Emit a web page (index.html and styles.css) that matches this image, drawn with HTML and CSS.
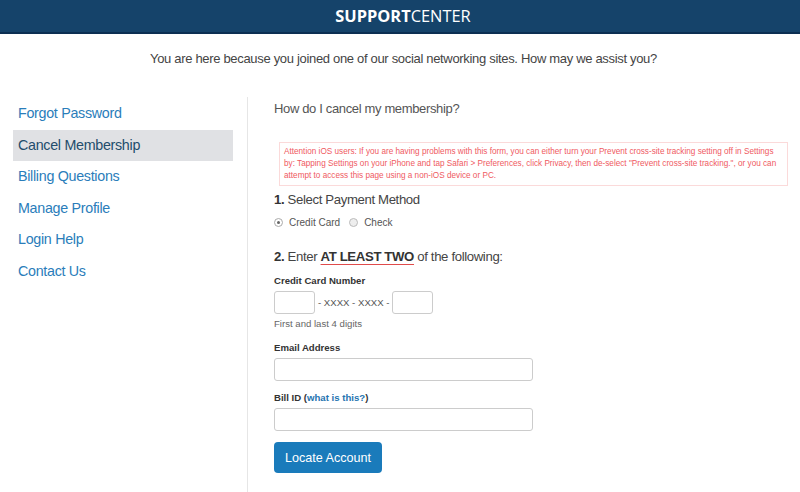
FILE: index.html
```html
<!DOCTYPE html>
<html>
<head>
<meta charset="utf-8">
<link rel="stylesheet" href="styles.css">
</head>
<body>
<header class="topbar">
  <div class="brand"><span class="brand-bold">SUPPORT</span><span class="brand-light">CENTER</span></div>
</header>
<p class="intro">You are here because you joined one of our social networking sites. How may we assist you?</p>
<div class="layout">
  <nav class="sidebar">
    <a class="nav-item" href="#">Forgot Password</a>
    <a class="nav-item active" href="#">Cancel Membership</a>
    <a class="nav-item" href="#">Billing Questions</a>
    <a class="nav-item" href="#">Manage Profile</a>
    <a class="nav-item" href="#">Login Help</a>
    <a class="nav-item" href="#">Contact Us</a>
  </nav>
  <main class="content">
    <h1 class="question">How do I cancel my membership?</h1>
    <div class="alert">Attention iOS users: If you are having problems with this form, you can either turn your Prevent cross-site tracking setting off in Settings by: Tapping Settings on your iPhone and tap Safari &gt; Preferences, click Privacy, then de-select "Prevent cross-site tracking.", or you can attempt to access this page using a non-iOS device or PC.</div>
    <h2 class="step"><b>1.</b> Select Payment Method</h2>
    <div class="radios">
      <label class="radio"><span class="dot checked"></span>Credit Card</label>
      <label class="radio"><span class="dot"></span>Check</label>
    </div>
    <h2 class="step step2"><b>2.</b> Enter <b class="emph">AT LEAST TWO</b> of the following:</h2>
    <div class="field cc-field">
      <div class="label">Credit Card Number</div>
      <div class="cc-row">
        <span class="input small"></span>
        <span class="mask">- XXXX - XXXX -</span>
        <span class="input small"></span>
      </div>
      <div class="hint">First and last 4 digits</div>
    </div>
    <div class="field">
      <div class="label">Email Address</div>
      <span class="input wide"></span>
    </div>
    <div class="field bill-field">
      <div class="label">Bill ID (<a class="what" href="#">what is this?</a>)</div>
      <span class="input wide"></span>
    </div>
    <button class="btn">Locate Account</button>
  </main>
</div>
</body>
</html>
```
FILE: styles.css
```css
html, body { margin: 0; padding: 0; background: #fff; }
body { font-family: "Liberation Sans", Arial, sans-serif; color: #444; width: 800px; height: 492px; overflow: hidden; }
.topbar { height: 32px; background: #15436a; border-bottom: 2px solid #0c2f52; display: flex; align-items: center; justify-content: center; }
.brand { font-family: "Open Sans", sans-serif; font-size: 16.4px; color: #fff; padding-left: 6px; line-height: 32px; }
.brand-bold { font-weight: 700; }
.brand-light { font-weight: 400; }
.intro { margin: 0; text-align: center; font-size: 13px; letter-spacing: -0.32px; color: #444; padding-top: 16px; height: 47px; line-height: 17px; padding-left: 7px; }
.layout { display: flex; }
.sidebar { width: 234px; padding: 1px 0 0 13px; border-right: 1px solid #e6e6e6; display: flex; flex-direction: column; height: 400px; }
.nav-item { display: block; height: 31.5px; line-height: 31.5px; padding-left: 5px; width: 215px; font-size: 14.3px; letter-spacing: -0.3px; color: #2a7dba; text-decoration: none; }
.nav-item.active { background: #e0e1e4; color: #234d6c; }
.content { padding: 0 0 0 26px; flex: 1; }
.question { margin: 4px 0 0 0; font-size: 13px; letter-spacing: -0.35px; font-weight: normal; color: #555; line-height: 16px; }
.alert { margin: 25px 12px 0 5px; border: 1px solid #fbdada; padding: 3px 4px; font-size: 8.2px; line-height: 12px; color: #ef5a5f; height: 36px; }
.step { margin: 5px 0 0 0; font-size: 13.2px; letter-spacing: -0.37px; font-weight: normal; color: #444; line-height: 17px; }
.step b { color: #333; }
.step2 { margin-top: 20px; }
.emph { text-decoration: underline; text-decoration-color: #e04b4b; text-underline-offset: 3px; text-decoration-thickness: 1px; }
.radios { display: flex; gap: 9px; margin-top: 9px; font-size: 10px; color: #555; }
.radio { display: flex; align-items: center; gap: 6px; }
.dot { width: 9px; height: 9px; border: 1px solid #bbb; border-radius: 50%; background: #eee; box-sizing: border-box; position: relative; }
.dot.checked { background: #fff; border-color: #aaa; }
.dot.checked::after { content: ""; position: absolute; left: 2px; top: 2px; width: 3px; height: 3px; border-radius: 50%; background: #666; }
.field { margin-top: 12px; }
.cc-field { margin-top: 10px; }
.bill-field { margin-top: 11px; }
.label { font-size: 9.6px; font-weight: bold; color: #333; line-height: 12px; margin-bottom: 4px; }
.cc-row { display: flex; align-items: center; gap: 3px; }
.input { display: block; height: 23px; border: 1px solid #ccc; border-radius: 3px; box-sizing: border-box; background: #fff; }
.input.small { width: 41px; }
.input.wide { width: 259px; }
.mask { font-size: 9.6px; color: #555; }
.hint { font-size: 9.6px; color: #666; margin-top: 4px; line-height: 12px; }
.what { color: #2574b0; text-decoration: none; }
.btn { margin-top: 11px; width: 108px; height: 31px; background: #1a7bbb; color: #fff; border: none; border-radius: 4px; font-family: "Liberation Sans", Arial, sans-serif; font-size: 12.6px; padding: 0; }
```
